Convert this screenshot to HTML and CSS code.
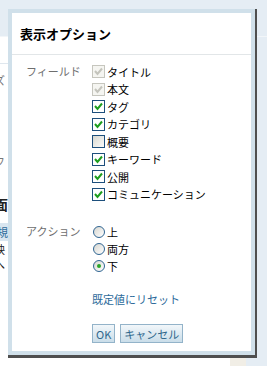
FILE: index.html
```html
<!DOCTYPE html>
<html lang="ja">
<head>
    <meta charset="UTF-8">
    <title>表示オプション</title>
    <link rel="stylesheet" href="styles.css">
</head>
<body>

    <!-- Page behind the dialog -->
    <div class="page">
        <div class="topbar"></div>
        <div class="main">
            <div class="behind">
                <div class="frag f1">ズ</div>
                <div class="frag f2">フ</div>
                <div class="frag f3">面</div>
                <div class="frag f4">規</div>
                <div class="frag f5">映</div>
                <div class="frag f6">へ</div>
            </div>
            <div class="foot"><span class="beige"></span></div>
        </div>
    </div>

    <!-- Options dialog -->
    <div class="dialog">
        <div class="dialog-title">表示オプション</div>

        <div class="section fields">
            <div class="label">フィールド</div>
            <div class="items">
                <div class="row"><span class="cb disabled"><svg viewBox="0 0 11 11"><path d="M2 5 L4.5 8 L9 2.5"/></svg></span>タイトル</div>
                <div class="row"><span class="cb disabled"><svg viewBox="0 0 11 11"><path d="M2 5 L4.5 8 L9 2.5"/></svg></span>本文</div>
                <div class="row"><span class="cb"><svg viewBox="0 0 11 11"><path d="M2 5 L4.5 8 L9 2.5"/></svg></span>タグ</div>
                <div class="row"><span class="cb"><svg viewBox="0 0 11 11"><path d="M2 5 L4.5 8 L9 2.5"/></svg></span>カテゴリ</div>
                <div class="row"><span class="cb empty"></span>概要</div>
                <div class="row"><span class="cb"><svg viewBox="0 0 11 11"><path d="M2 5 L4.5 8 L9 2.5"/></svg></span>キーワード</div>
                <div class="row"><span class="cb"><svg viewBox="0 0 11 11"><path d="M2 5 L4.5 8 L9 2.5"/></svg></span>公開</div>
                <div class="row"><span class="cb"><svg viewBox="0 0 11 11"><path d="M2 5 L4.5 8 L9 2.5"/></svg></span>コミュニケーション</div>
            </div>
        </div>

        <div class="section actions">
            <div class="label">アクション</div>
            <div class="items">
                <div class="row radio-row"><span class="radio"></span>上</div>
                <div class="row radio-row"><span class="radio"></span>両方</div>
                <div class="row radio-row"><span class="radio on"></span>下</div>
            </div>
        </div>

        <div class="reset"><a href="#">既定値にリセット</a></div>

        <div class="buttons">
            <button>OK</button>
            <button>キャンセル</button>
        </div>
    </div>

</body>
</html>
```

FILE: styles.css
```css
body {
    margin: 0;
    font-family: "Noto Sans CJK JP", "DejaVu Sans", sans-serif;
    font-size: 11px;
    background-color: #e5edf4;
    overflow: hidden;
}

/* Page behind */
.page {
    height: 366px;
    display: flex;
    flex-direction: column;
}

.topbar {
    height: 36px;
    border-bottom: 1px solid #f2f6f9;
}

.main {
    flex: 1;
    width: 246px;
    background-color: #fff;
    display: flex;
    flex-direction: column;
}

.behind {
    flex: 1;
    border-top: 1px solid #dfe7ee;
    margin-top: 26px;
}

.frag {
    margin-left: -6px;
    width: 14px;
    height: 17px;
    line-height: 17px;
    color: #222;
}

.f1 { margin-top: 8px; color: #777; }
.f2 { margin-top: 64px; color: #777; }
.f3 { margin-top: 26px; font-weight: bold; font-size: 14px; }
.f4 {
    margin-top: 10px;
    margin-left: 0;
    width: 8px;
    overflow: hidden;
    direction: rtl;
    background-color: #d9e6f0;
    color: #2c6a9a;
    height: 18px;
    line-height: 18px;
}
.f5 { margin-top: 0; }
.f6 { margin-top: -2px; }

.foot {
    height: 8px;
    display: flex;
    justify-content: flex-end;
}

.beige {
    width: 16px;
    background-color: #f1eee6;
}

/* Dialog */
.dialog {
    position: absolute;
    left: 8px;
    top: 9px;
    width: 239px;
    height: 338px;
    background-color: #fff;
    border: 4px solid #d0e0ea;
    box-shadow: 2px 0 0 #4f4f4f, 0 3px 0 #4f4f4f, 2px 3px 0 #4f4f4f;
    display: flex;
    flex-direction: column;
}

.dialog-title {
    height: 41px;
    line-height: 41px;
    padding-left: 8px;
    font-size: 13px;
    font-weight: bold;
    color: #000;
    border-bottom: 1px solid #e2e6e8;
}

.section {
    display: flex;
}

.fields {
    margin-top: 8px;
}

.actions {
    margin-top: 20px;
}

.label {
    width: 66px;
    padding-left: 14px;
    line-height: 17px;
    color: #6e6e6e;
}

.items {
    display: flex;
    flex-direction: column;
}

.row {
    height: 17.5px;
    display: flex;
    align-items: center;
    color: #000;
}

.radio-row {
    height: 17px;
}

/* Checkboxes */
.cb {
    width: 11px;
    height: 11px;
    border: 1px solid #1d4f7c;
    background-color: #fff;
    margin-right: 2px;
    display: flex;
}

.cb svg {
    width: 11px;
    height: 11px;
}

.cb path {
    fill: none;
    stroke: #1e9e1e;
    stroke-width: 2;
}

.cb.disabled {
    border-color: #c6c6be;
    background-color: #f5f5f1;
}

.cb.disabled path {
    stroke: #c4c4bc;
}

.cb.empty {
    background: linear-gradient(135deg, #d8d8d0, #fbfbfa);
}

/* Radios */
.radio {
    width: 10px;
    height: 10px;
    border: 1px solid #2f6592;
    border-radius: 50%;
    background: linear-gradient(135deg, #d6d6d0, #ffffff);
    margin-right: 2px;
    margin-left: 1px;
    display: flex;
    align-items: center;
    justify-content: center;
}

.radio.on::after {
    content: "";
    width: 4px;
    height: 4px;
    border-radius: 50%;
    background-color: #2aa52a;
}

/* Reset link */
.reset {
    margin-top: 17px;
    padding-left: 80px;
    height: 17px;
    line-height: 17px;
}

.reset a {
    color: #2c6a9a;
    text-decoration: none;
}

/* Buttons */
.buttons {
    margin-top: 16px;
    padding-left: 80px;
    display: flex;
    gap: 5px;
}

.buttons button {
    height: 19px;
    padding: 0 3px;
    font-family: "Noto Sans CJK JP", "DejaVu Sans", sans-serif;
    font-size: 11px;
    color: #30678c;
    border: 1px solid #93b3c9;
    background: linear-gradient(#f2f7fa, #cadde9);
    cursor: pointer;
}
```
